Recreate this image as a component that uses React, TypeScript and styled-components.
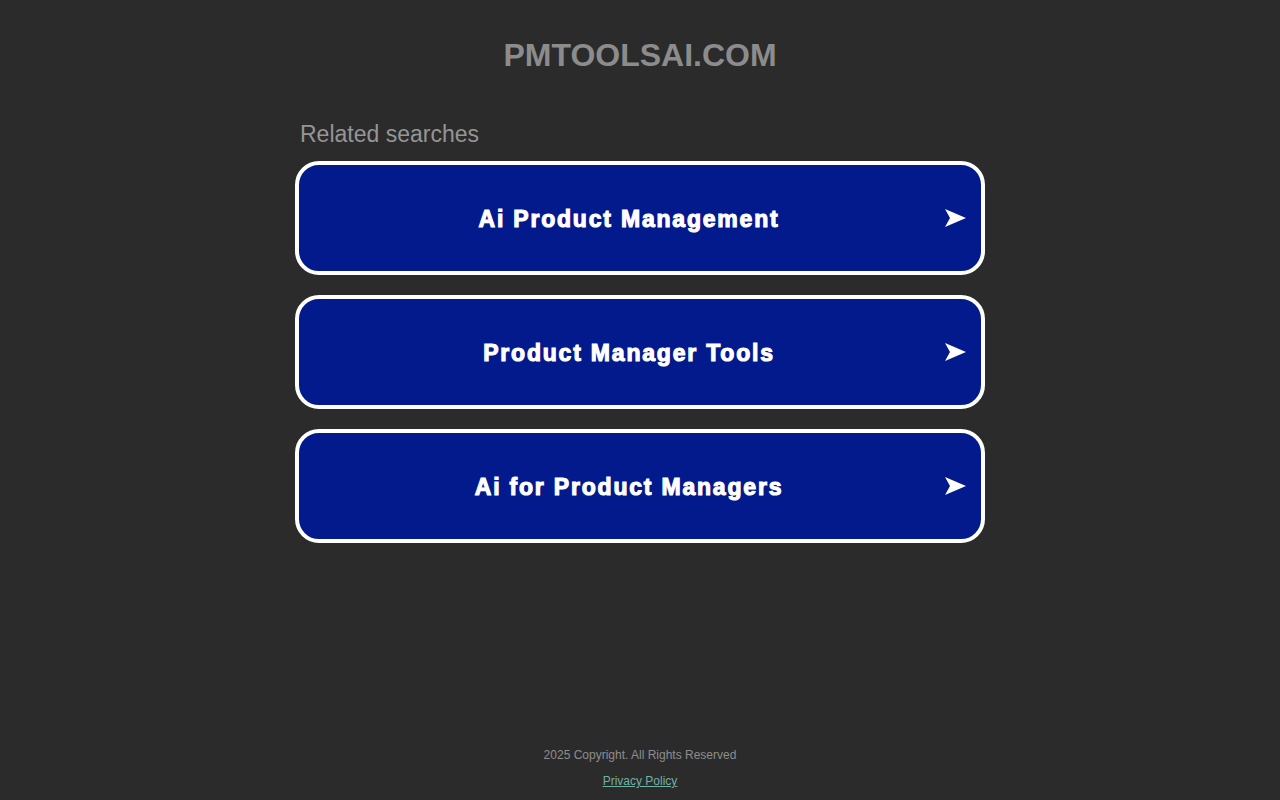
import styled, { createGlobalStyle } from 'styled-components';

const GlobalStyle = createGlobalStyle`
    html, body {
        margin: 0;
        padding: 0;
        background: #2b2b2b;
        font-family: "Liberation Sans", Arial, sans-serif;
    }
`;

const Page = styled.div`
    display: flex;
    flex-direction: column;
    align-items: center;
    min-height: 800px;
`;

const Domain = styled.h1`
    margin: 36px 0 0;
    font-size: 32px;
    line-height: 38px;
    font-weight: 700;
    color: #8c8c8c;
`;

const Related = styled.section`
    width: 690px;
    margin-top: 47px;
    display: flex;
    flex-direction: column;
`;

const Heading = styled.div`
    padding-left: 5px;
    font-size: 23px;
    line-height: 26px;
    color: #959595;
    margin-bottom: 14px;
`;

const List = styled.div`
    display: flex;
    flex-direction: column;
    gap: 20px;
`;

const SearchLink = styled.a`
    position: relative;
    display: flex;
    align-items: center;
    justify-content: center;
    box-sizing: border-box;
    height: 114px;
    padding-right: 22px;
    padding-top: 2px;
    border: 4px solid #fff;
    border-radius: 24px;
    background: #031a8c;
    color: #fff;
    text-decoration: none;
    font-size: 23px;
    font-weight: 900;
    letter-spacing: 1.8px;
    -webkit-text-stroke: 1.1px #fff;
`;

const Arrow = styled.svg`
    position: absolute;
    right: 15px;
    top: 50%;
    margin-top: -9px;
`;

const Footer = styled.footer`
    margin-top: auto;
    padding-bottom: 11px;
    display: flex;
    flex-direction: column;
    align-items: center;
    gap: 11px;
    font-size: 12px;
    line-height: 15px;
    color: #8e8e8e;
`;

const Privacy = styled.a`
    color: #6fb1a6;
    text-decoration: underline;
`;

const searches = ['Ai Product Management', 'Product Manager Tools', 'Ai for Product Managers'];

export default function App() {
    return (
        <>
            <GlobalStyle />
            <Page>
                <Domain>PMTOOLSAI.COM</Domain>
                <Related>
                    <Heading>Related searches</Heading>
                    <List>
                        {searches.map((s) => (
                            <SearchLink key={s} href="#">
                                {s}
                                <Arrow width="21" height="18" viewBox="0 0 21 18">
                                    <path d="M0 0 L21 9 L0 18 L5 9 Z" fill="#fff" />
                                </Arrow>
                            </SearchLink>
                        ))}
                    </List>
                </Related>
                <Footer>
                    <div>2025 Copyright. All Rights Reserved</div>
                    <Privacy href="#">Privacy Policy</Privacy>
                </Footer>
            </Page>
        </>
    );
}
